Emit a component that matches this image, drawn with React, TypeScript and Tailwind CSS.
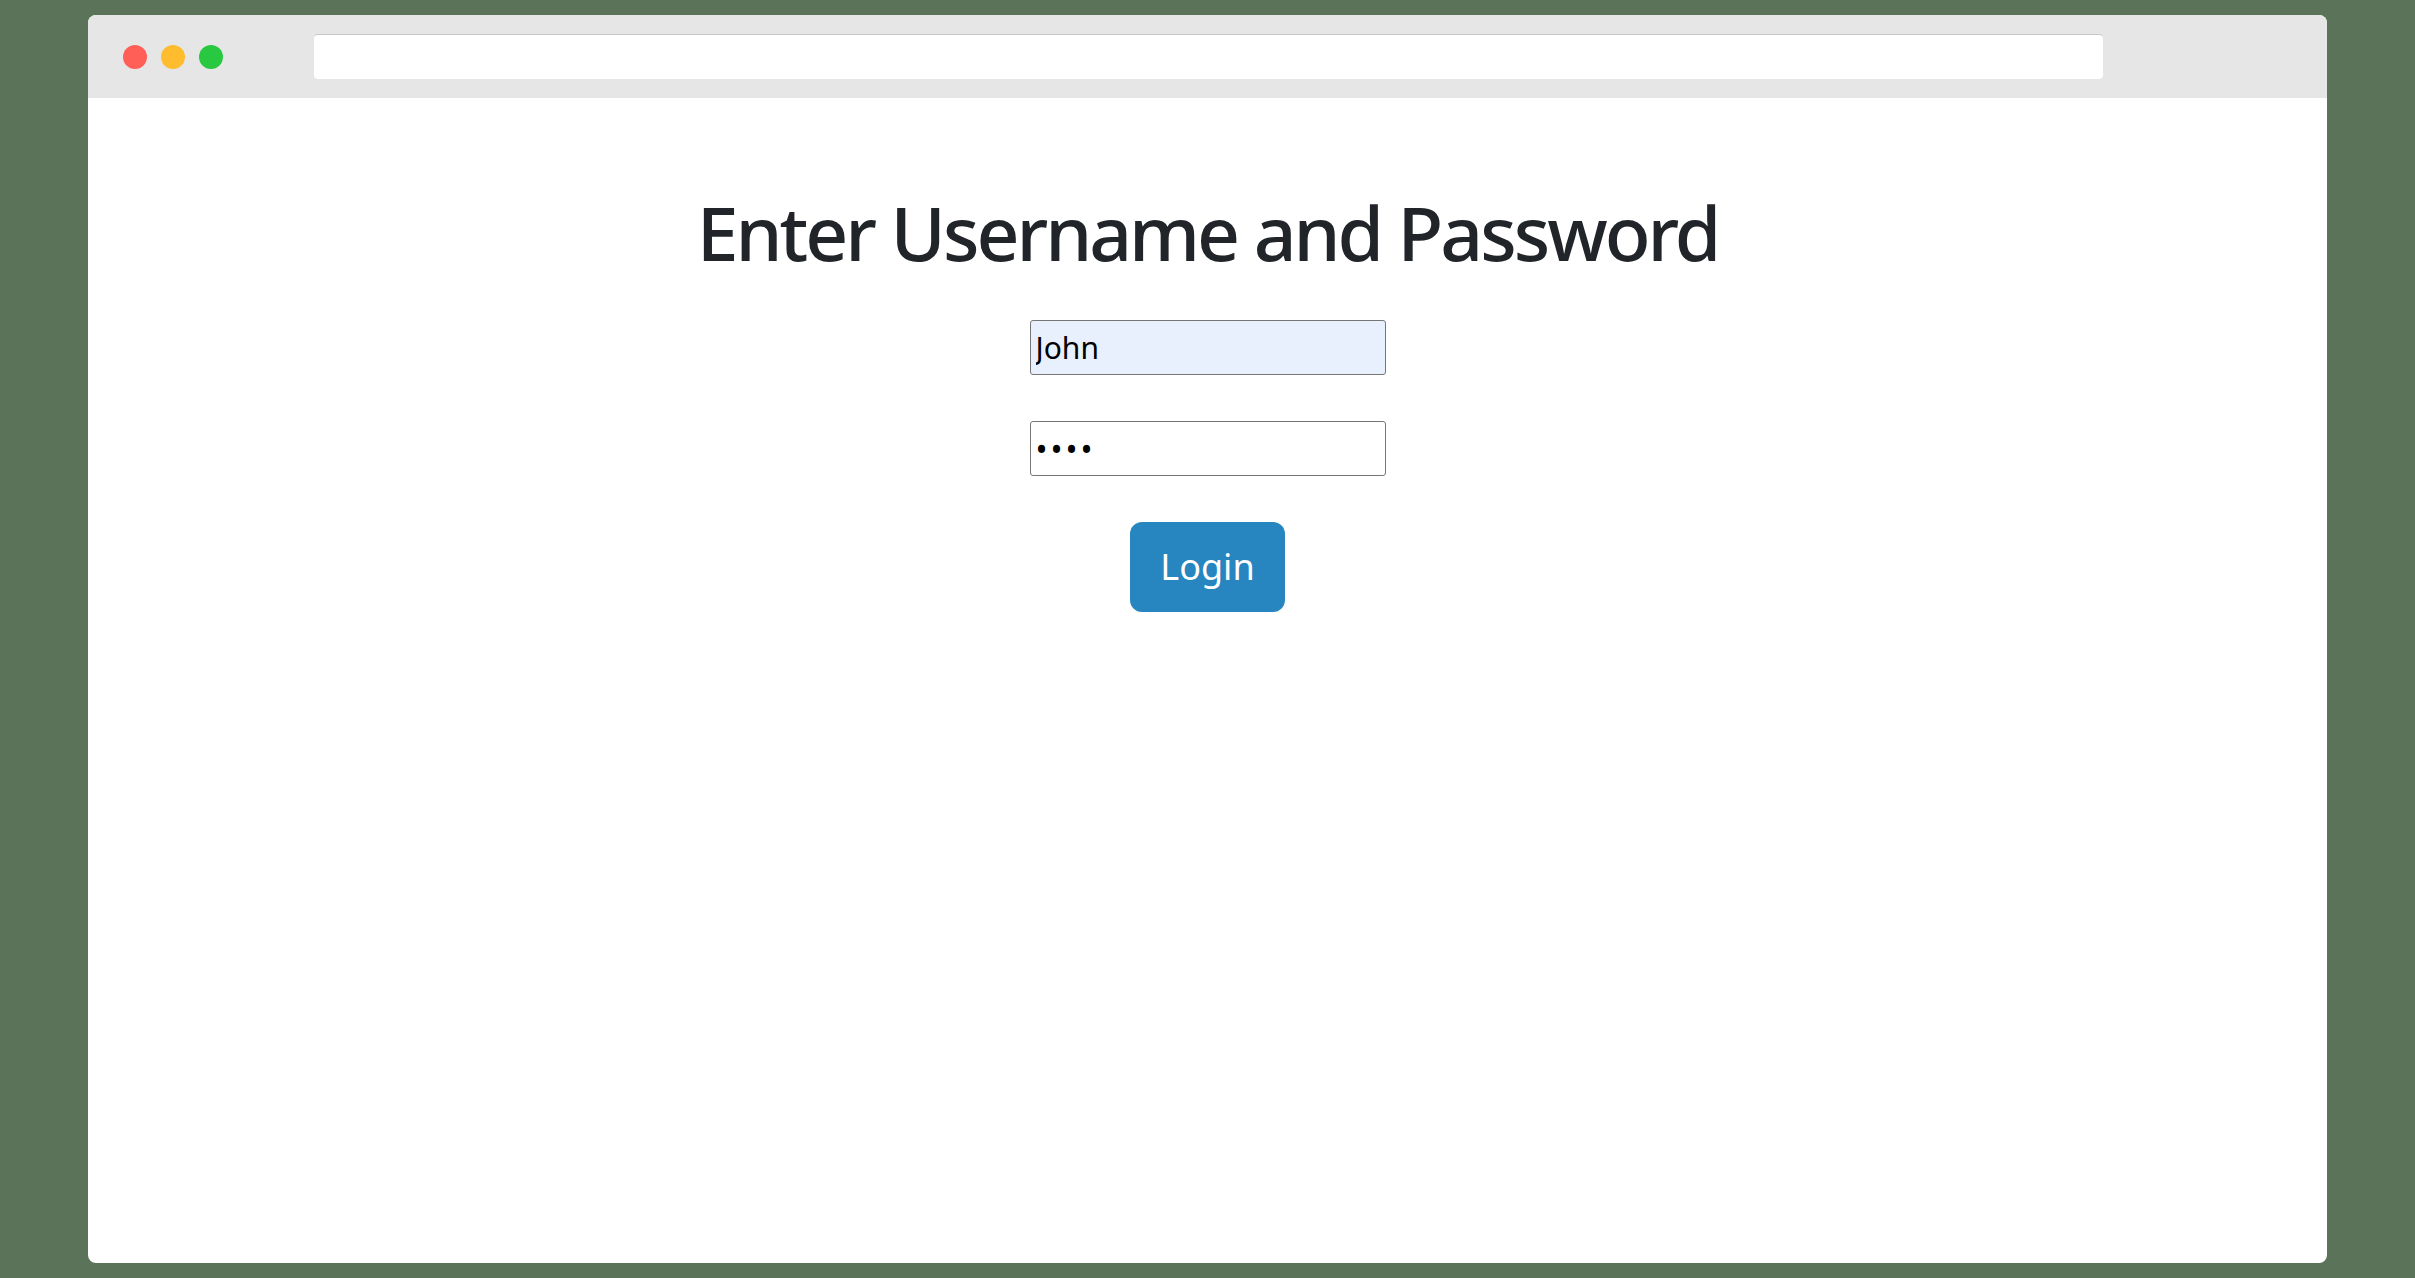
import React from "react";

export default function App() {
  return (
    <div
      className="min-h-screen w-full bg-[#5b7459] px-[88px] py-[15px]"
      style={{ fontFamily: '"Noto Sans", "Open Sans", sans-serif' }}
    >
      <div className="flex h-[1248px] flex-col overflow-hidden rounded-[8px] bg-white">
        <div className="flex h-[83px] shrink-0 items-center bg-[#e6e6e6] pl-[35px] pr-[224px]">
          <div className="flex items-center gap-[14px]">
            <span className="block h-6 w-6 rounded-full bg-[#ff5f57]" />
            <span className="block h-6 w-6 rounded-full bg-[#febc2e]" />
            <span className="block h-6 w-6 rounded-full bg-[#28c840]" />
          </div>
          <div className="ml-[91px] h-[45px] flex-1 rounded-[4px] border-t border-[#c6c6c6] bg-white" />
        </div>
        <div className="flex flex-col items-center">
          <h1 className="mt-[97px] text-[75px] leading-none font-medium tracking-[-3px] text-[#212529]">
            Enter Username and Password
          </h1>
          <input
            readOnly
            value="John"
            className="mt-[50px] h-[55px] w-[356px] rounded-[3px] border border-[#767676] bg-[#e8f0fe] px-[5px] text-[30px] text-black outline-none"
          />
          <input
            readOnly
            type="password"
            value="abcd"
            className="mt-[46px] h-[55px] w-[356px] rounded-[3px] border border-[#767676] bg-white px-[5px] text-[32px] tracking-[3px] text-black outline-none"
          />
          <button className="mt-[46px] flex h-[90px] w-[155px] items-center justify-center rounded-[12px] bg-[#2785c0] text-[36px] text-white">
            Login
          </button>
        </div>
      </div>
    </div>
  );
}
